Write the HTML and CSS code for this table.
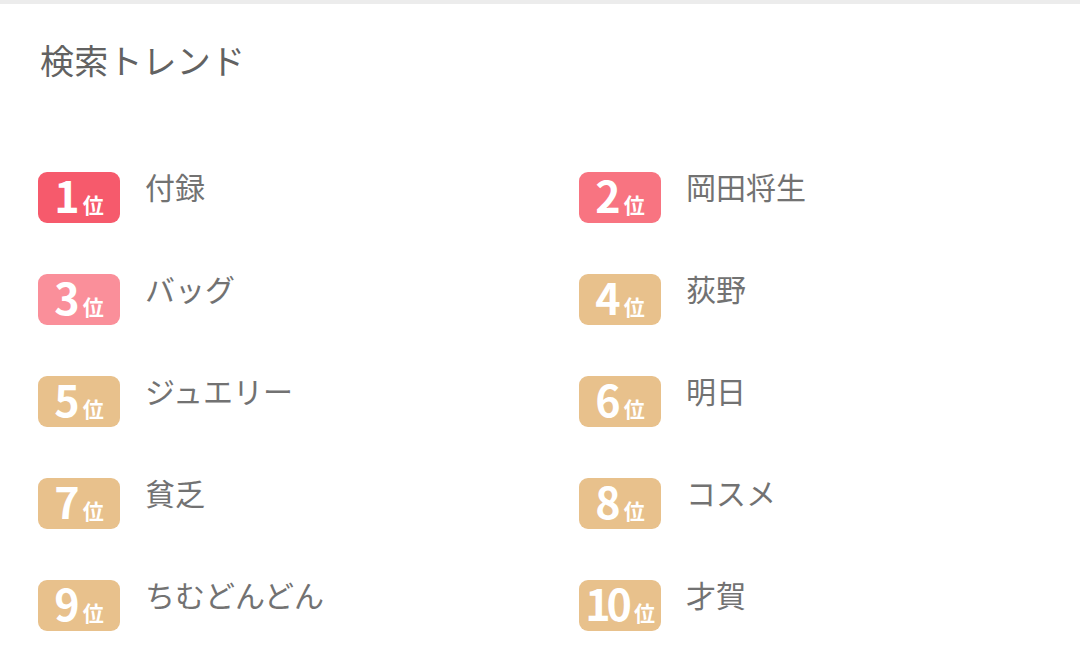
FILE: index.html
```html
<!DOCTYPE html>
<html lang="ja">
<head>
<meta charset="utf-8">
<link rel="stylesheet" href="styles.css">
</head>
<body>
<div class="topbar"></div>
<section class="trend">
  <h2 class="title">検索トレンド</h2>
  <ol class="list">
    <li class="item"><span class="badge r1"><b>1</b><i>位</i></span><span class="word">付録</span></li>
    <li class="item"><span class="badge r2"><b>2</b><i>位</i></span><span class="word">岡田将生</span></li>
    <li class="item"><span class="badge r3"><b>3</b><i>位</i></span><span class="word">バッグ</span></li>
    <li class="item"><span class="badge"><b>4</b><i>位</i></span><span class="word">荻野</span></li>
    <li class="item"><span class="badge"><b>5</b><i>位</i></span><span class="word">ジュエリー</span></li>
    <li class="item"><span class="badge"><b>6</b><i>位</i></span><span class="word">明日</span></li>
    <li class="item"><span class="badge"><b>7</b><i>位</i></span><span class="word">貧乏</span></li>
    <li class="item"><span class="badge"><b>8</b><i>位</i></span><span class="word">コスメ</span></li>
    <li class="item"><span class="badge"><b>9</b><i>位</i></span><span class="word">ちむどんどん</span></li>
    <li class="item"><span class="badge"><b class="two">10</b><i>位</i></span><span class="word">才賀</span></li>
  </ol>
</section>
</body>
</html>
```

FILE: styles.css
```css
html, body {
  margin: 0;
  padding: 0;
  background: #fff;
  font-family: "Noto Sans CJK JP", "Noto Sans", sans-serif;
}
.topbar {
  height: 4px;
  background: #ececec;
}
.trend {
  padding: 0 0 0 38px;
}
.title {
  margin: 0;
  padding: 32px 0 0 2px;
  height: 60px;
  font-size: 34px;
  line-height: 48px;
  font-weight: 400;
  color: #626262;
  letter-spacing: 0.2px;
}
.list {
  list-style: none;
  margin: 76px 0 0 0;
  padding: 0;
  display: grid;
  grid-template-columns: 541px 1fr;
  row-gap: 51px;
}
.item {
  display: flex;
  align-items: flex-start;
  height: 51px;
}
.badge {
  box-sizing: border-box;
  width: 82px;
  height: 51px;
  border-radius: 9px;
  background: #e8c18c;
  color: #fff;
  display: flex;
  justify-content: center;
  align-items: baseline;
  line-height: 1;
}
.badge b {
  font-weight: 700;
  font-size: 43px;
  line-height: 45px;
  margin-right: 3px;
}
.badge b.two {
  letter-spacing: -4px;
  margin-right: 6px;
}
.badge i {
  font-style: normal;
  font-weight: 700;
  font-size: 21px;
  line-height: 21px;
}
.badge.r1 { background: #f65a6c; }
.badge.r2 { background: #f87481; }
.badge.r3 { background: #fa8f9a; }
.word {
  margin-left: 25px;
  font-size: 30px;
  line-height: 28px;
  font-weight: 400;
  color: #727272;
}
```
